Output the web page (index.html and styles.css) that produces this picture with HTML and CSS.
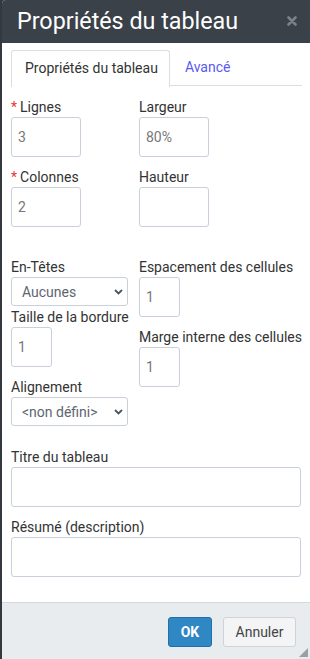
FILE: index.html
```html
<!DOCTYPE html>
<html lang="fr">
<head>
        <meta charset="UTF-8">
        <meta name="viewport" content="width=device-width, initial-scale=1.0">
        <title>Propriétés du tableau</title>
        <link rel="stylesheet" href="styles.css">
</head>
<body>
        <div class="dialog">
                <div class="header">
                        <h1>Propriétés du tableau</h1>
                        <svg class="close" width="10" height="10" viewBox="0 0 10 10">
                                <path d="M1.5 1.5 L8.5 8.5 M8.5 1.5 L1.5 8.5" stroke="#7b8187" stroke-width="2.6" stroke-linecap="round"/>
                        </svg>
                </div>

                <div class="content">
                        <div class="tabs">
                                <div class="tab active">Propriétés du tableau</div>
                                <div class="tab">Avancé</div>
                        </div>

                        <div class="grid">
                                <div class="field">
                                        <label><span class="req">*</span>Lignes</label>
                                        <input type="text" class="w70" value="3">
                                </div>
                                <div class="field">
                                        <label>Largeur</label>
                                        <input type="text" class="w70" value="80%">
                                </div>
                                <div class="field">
                                        <label><span class="req">*</span>Colonnes</label>
                                        <input type="text" class="w70" value="2">
                                </div>
                                <div class="field">
                                        <label>Hauteur</label>
                                        <input type="text" class="w70" value="">
                                </div>
                        </div>

                        <div class="cols">
                                <div class="col-left">
                                        <label>En-Têtes</label>
                                        <div class="select-wrap">
                                                <select><option>Aucunes</option></select>
                                                <svg class="chevron" width="9" height="6" viewBox="0 0 9 6"><path d="M1 1 L4.5 4.5 L8 1" fill="none" stroke="#4a5560" stroke-width="1.8"/></svg>
                                        </div>
                                        <label>Taille de la bordure</label>
                                        <input type="text" class="w41 gap" value="1">
                                        <label>Alignement</label>
                                        <div class="select-wrap">
                                                <select><option>&lt;non défini&gt;</option></select>
                                                <svg class="chevron" width="9" height="6" viewBox="0 0 9 6"><path d="M1 1 L4.5 4.5 L8 1" fill="none" stroke="#4a5560" stroke-width="1.8"/></svg>
                                        </div>
                                </div>
                                <div class="col-right">
                                        <label>Espacement des cellules</label>
                                        <input type="text" class="w41 gap" value="1">
                                        <label>Marge interne des cellules</label>
                                        <input type="text" class="w41" value="1">
                                </div>
                        </div>

                        <div class="wide">
                                <label>Titre du tableau</label>
                                <input type="text" class="full gap" value="">
                                <label>Résumé (description)</label>
                                <input type="text" class="full" value="">
                        </div>
                </div>

                <div class="footer">
                        <button class="btn ok">OK</button>
                        <button class="btn cancel">Annuler</button>
                        <div class="grip"></div>
                </div>
        </div>
</body>
</html>
```

FILE: styles.css
```css
*{
        margin: 0;
        padding: 0;
        box-sizing: border-box;
}
body{
        background-color: #34393f;
        font-family: Roboto, "Liberation Sans", sans-serif;
        font-size: 14px;
        color: #333;
}
.dialog{
        margin-left: 2px;
        height: 659px;
        background-color: #fff;
        border-top-left-radius: 4px;
        display: flex;
        flex-direction: column;
        overflow: hidden;
}
.header{
        height: 43px;
        background-color: #3a4149;
        display: flex;
        align-items: center;
        justify-content: space-between;
        padding: 0 13px 0 15px;
}
.header h1{
        font-weight: normal;
        font-size: 23.3px;
        line-height: 43px;
        color: #fff;
}
.close{
        margin-top: -1px;
}
.content{
        flex: 1;
        padding: 7px 8px 0 9px;
}
.tabs{
        display: flex;
        border-bottom: 1px solid #ddd;
        height: 36px;
}
.tab{
        padding: 0 15px;
        line-height: 34px;
        color: #5a5af2;
}
.tab.active{
        border: 1px solid #ddd;
        border-bottom: none;
        border-radius: 3px 3px 0 0;
        background-color: #fff;
        height: 37px;
        padding: 0 11px 0 13px;
        color: #333;
}
label{
        display: block;
        height: 20px;
        line-height: 20px;
        white-space: nowrap;
}
.req{
        color: #e53935;
        margin-right: 3px;
}
input, select{
        display: block;
        border: 1px solid #c9d0da;
        border-radius: 3px;
        font-family: inherit;
        font-size: 14px;
        color: #777;
        background-color: #fff;
        padding: 0 6px;
        height: 40px;
        outline: none;
}
.w70{
        width: 70px;
}
.w41{
        width: 41px;
}
.full{
        width: 290px;
}
.gap{
        margin-bottom: 10px;
}
.grid{
        margin-top: 11px;
        display: grid;
        grid-template-columns: 128px 1fr;
        row-gap: 10px;
}
.cols{
        margin-top: 30px;
        display: flex;
}
.col-left{
        width: 128px;
}
.select-wrap{
        position: relative;
        width: 117px;
        margin-bottom: 1px;
}
.select-wrap select{
        appearance: none;
        -webkit-appearance: none;
        width: 117px;
        height: 29px;
        padding-left: 10px;
        color: #5d6670;
}
.chevron{
        position: absolute;
        right: 5px;
        top: 12px;
}
.wide{
        margin-top: 20px;
}
.footer{
        height: 57px;
        background-color: #e9ecee;
        border-top: 1px solid #d3d8db;
        display: flex;
        justify-content: flex-end;
        align-items: flex-start;
        padding: 14px 14px 0 0;
        gap: 11px;
        position: relative;
}
.btn{
        height: 30px;
        border-radius: 3px;
        font-family: inherit;
        font-size: 14px;
}
.ok{
        width: 44px;
        background-color: #2f87c4;
        border: 1px solid #1f6fa8;
        color: #fff;
        font-weight: bold;
}
.cancel{
        width: 73px;
        background-color: #f3f4f5;
        border: 1px solid #cfd3d6;
        color: #444;
}
.grip{
        position: absolute;
        right: 2px;
        bottom: 2px;
        width: 0;
        height: 0;
        border-left: 9px solid transparent;
        border-bottom: 9px solid #9aa0a5;
}
```
